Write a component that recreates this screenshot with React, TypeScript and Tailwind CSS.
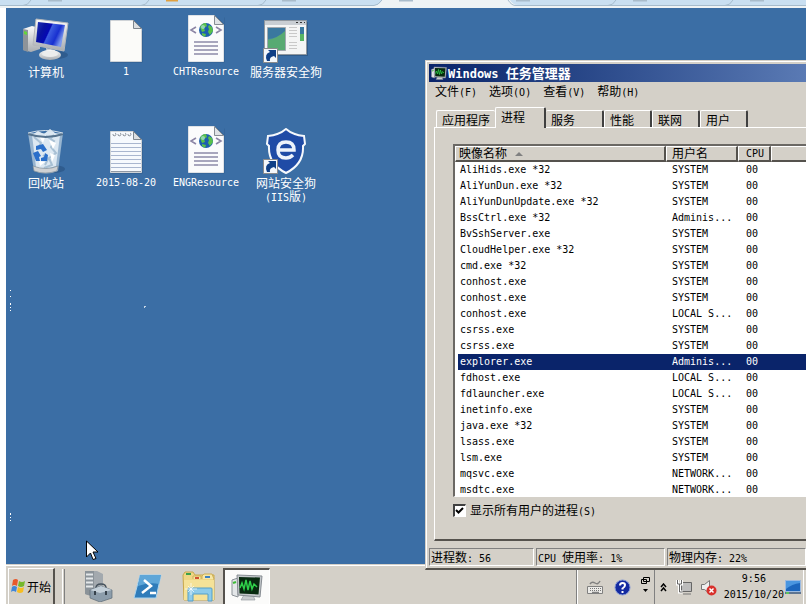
import type { ReactNode } from "react";

const ROWS = [
  ["AliHids.exe *32", "SYSTEM"],
  ["AliYunDun.exe *32", "SYSTEM"],
  ["AliYunDunUpdate.exe *32", "SYSTEM"],
  ["BssCtrl.exe *32", "Adminis..."],
  ["BvSshServer.exe", "SYSTEM"],
  ["CloudHelper.exe *32", "SYSTEM"],
  ["cmd.exe *32", "SYSTEM"],
  ["conhost.exe", "SYSTEM"],
  ["conhost.exe", "SYSTEM"],
  ["conhost.exe", "LOCAL S..."],
  ["csrss.exe", "SYSTEM"],
  ["csrss.exe", "SYSTEM"],
  ["explorer.exe", "Adminis..."],
  ["fdhost.exe", "LOCAL S..."],
  ["fdlauncher.exe", "LOCAL S..."],
  ["inetinfo.exe", "SYSTEM"],
  ["java.exe *32", "SYSTEM"],
  ["lsass.exe", "SYSTEM"],
  ["lsm.exe", "SYSTEM"],
  ["mqsvc.exe", "NETWORK..."],
  ["msdtc.exe", "NETWORK..."],
];

const MENUS = ["文件(F)", "选项(O)", "查看(V)", "帮助(H)"];

// Latin glyphs are half as wide as the Chinese ones
function T({ children }: { children: string }) {
  return (
    <span>
      {children.split(/([\u4e00-\u9fff]+)/).map((s, i) =>
        i % 2 ? (
          <span key={i} className="text-[12px] font-['Noto_Sans_CJK_SC',sans-serif]">{s}</span>
        ) : (
          s
        )
      )}
    </span>
  );
}

function ComputerIcon() {
  return (
    <svg width="48" height="48" viewBox="0 0 48 48">
      <defs>
        <linearGradient id="scr" x1="0" y1="0" x2="1" y2=".4">
          <stop offset="0" stopColor="#2438b8" />
          <stop offset=".3" stopColor="#0a12a0" />
          <stop offset=".5" stopColor="#0408b4" />
          <stop offset=".54" stopColor="#3c5ce0" />
          <stop offset=".8" stopColor="#1830d0" />
          <stop offset="1" stopColor="#7c98ec" />
        </linearGradient>
        <linearGradient id="metal" x1="0" y1="0" x2="0" y2="1">
          <stop offset="0" stopColor="#fafafa" />
          <stop offset="1" stopColor="#a9adb1" />
        </linearGradient>
      </defs>
      <ellipse cx="34" cy="38" rx="12" ry="4" fill="#234a78" opacity=".5" />
      <path d="M1 12l9-3 8 2v21l-9 3-8-2z" fill="url(#metal)" />
      <path d="M1 12l5 1v22l-5-2z" fill="#8d9399" />
      <path d="M2 14l3 1v3l-3-1z" fill="#63d63a" />
      <path d="M24 31l9 2-1 5h-7z" fill="#cdd0d3" />
      <ellipse cx="28" cy="38" rx="11" ry="5" fill="url(#metal)" />
      <ellipse cx="28" cy="37" rx="8" ry="3" fill="#eceded" />
      <path d="M14 2l32 4-4 28-31-6z" fill="url(#metal)" stroke="#b4b7bb" />
      <path d="M16 5l27 3-4 22-25-5z" fill="url(#scr)" />
    </svg>
  );
}

function BinIcon() {
  return (
    <svg width="48" height="48" viewBox="0 0 48 48">
      <ellipse cx="31" cy="41" rx="12" ry="4" fill="#234a78" opacity=".5" />
      <path d="M6 5l35 0-5 38q-12 5-24 0z" fill="#98b5d0" />
      <path d="M10 7l6-4 6 3 6-5 5 4 5 2-4 31q-11 4-20 1z" fill="#dce8f2" />
      <path d="M24 8l8 5-3 6 5 6-7 5 3 7-8 3M12 9l7 6-4 7M32 7l-4 4M21 27l5 4-3 6" fill="none" stroke="#a8c0d4" strokeWidth="2" />
      <path d="M27 12l7 3-3 6zM28 25l5 2-3 7zM17 8l6 1-2 6zM17 33l6 1-5 4z" fill="#fff" />
      <path d="M6 6q18 6 35 0" fill="none" stroke="#56738e" strokeWidth="2" />
      <path d="M6 5q17-5 35 0" fill="none" stroke="#d3dfe9" strokeWidth="1" />
      <path d="M11 38q13 5 25 0l-1 5q-12 4-23 0z" fill="#cfd1d3" stroke="#7b8892" strokeWidth=".6" />
      <path d="M14 18l7-2 4 6-4 2-2-3-5 1zM11 25l5-2 3 5-2 1 1 4-4 0zM19 33l6 0 1-6-3-2-1 4-3 1z" fill="#2a6fca" />
    </svg>
  );
}

function PageIcon({ lined = false }: { lined?: boolean }) {
  return (
    <svg width="48" height="48" viewBox="0 0 48 48">
      <path d="M9.500 5.500h22l9 9v31h-31z" fill="#24486f" opacity=".5" />
      <path d="M8.500 3.500h23l8 8v33h-31z" fill={lined ? "#f6f9fd" : "#fbfbf9"} stroke="#cfd3d7" />
      {lined && (
        <>
          <path d="M9 15.500h30M9 19.500h30M9 23.500h30M9 27.500h30M9 31.500h30M9 35.500h30M9 39.500h30" stroke="#a9b6cf" />
          <path d="M9 43.500h30" stroke="#8f98a4" />
          <path d="M11 6a1.500 1.500 0 1 0 2-1M16 6a1.500 1.500 0 1 0 2-1M21 6a1.500 1.500 0 1 0 2-1M26 6a1.500 1.500 0 1 0 2-1" fill="none" stroke="#777f89" strokeWidth=".8" />
        </>
      )}
      <path d="M31.500 3.500v8h8z" fill="#dcdfe1" stroke="#7f868d" />
    </svg>
  );
}

function XmlIcon() {
  return (
    <svg className="overflow-visible" width="48" height="48" viewBox="0 4 48 48">
      <path d="M7.500 4.500h35v45h-35z" fill="#24486f" opacity=".4" />
      <path d="M6.500 2.500h26l9 9v37h-35z" fill="#fbfbfc" stroke="#dfe2e6" />
      <path d="M33 2l9 9V2z" fill="#3b6ea5" />
      <path d="M32.500 2.500v9h9z" fill="#e0e3e6" stroke="#868c94" />
      <path d="M14 14l-5 3 5 3M34 14l5 3-5 3" fill="none" stroke="#8d86a6" strokeWidth="1.600" />
      <circle cx="24" cy="17" r="7" fill="#1e5fae" />
      <path d="M18 14q2-4 6-4l1 3-3 2 1 3-3 1zM27 12l3 2 1 4-3 4-2-3 1-3-1-2zM20 20l4 1-1 3-3-2z" fill="#59c14b" />
      <circle cx="21" cy="14" r="2" fill="#b9e4f4" opacity=".6" />
      <path d="M12 29h24M12 33h24M12 37h24M12 41h24" stroke="#8d8ba8" strokeWidth="1.600" />
    </svg>
  );
}

function Shortcut() {
  return (
    <g>
      <path d="M1.500 33.500h14v14h-14z" fill="#f3f7fb" stroke="#8b8b8b" />
      <path d="M5 46q-3-7 3-9l-2-2h8v8l-2-2q-5 1-4 5z" fill="#0f3f86" />
    </g>
  );
}

function ServerDogIcon() {
  return (
    <svg width="48" height="48" viewBox="0 2 48 48">
      <path d="M3 7h43v34H3z" fill="#24486f" opacity=".5" />
      <path d="M2.500 5.500h42v34h-42z" fill="#f4f5f5" stroke="#8f979f" />
      <path d="M3 6h41v4H3z" fill="#c9ced3" />
      <path d="M34 7.500h2M38 7.500h2M42 7.500h1" stroke="#333" />
      <path d="M5.500 12.500h18v23h-18z" fill="#4a92a0" stroke="#a1a9b0" />
      <path d="M6 35v-10q10-2 17-10v20z" fill="#58aa72" />
      <path d="M6 13h17v3q-7 7-17 8z" fill="#3a789f" />
      <path d="M27 12.500h8M27 15.500h8M27 18.500h8M27 21.500h8M27 27.500h8M27 30.500h8M27 33.500h8" stroke="#c9c9c9" />
      <path d="M38 12h4v7h-4z" fill="#3a789f" />
      <path d="M38 19h4v7h-4z" fill="#58b464" />
      <Shortcut />
    </svg>
  );
}

function ShieldIcon() {
  return (
    <svg width="48" height="48" viewBox="0 2 48 48">
      <path d="M24 3q7 6 18 7l1 8-2 2q1 18-17 27Q6 38 7 20l-2-2 1-8q11-1 18-7z" fill="#1f4ba6" stroke="#f5f8fc" strokeWidth="2" />
      <path d="M17 24h15q0-8-8-8t-8 8 8 8q4 0 7-3" fill="none" stroke="#eef3fb" strokeWidth="3.500" />
      <Shortcut />
    </svg>
  );
}

function DesktopIcon({ label, children }: { label: string; children: ReactNode }) {
  return (
    <button className="flex flex-col items-center text-white">
      {children}
      <span className="flex flex-col items-center whitespace-nowrap leading-[13px]">
        {label.split("\n").map((l) => (
          <span key={l} className="block h-[13px]"><T>{l}</T></span>
        ))}
      </span>
    </button>
  );
}

function MonitorGlyph({ className }: { className: string }) {
  return (
    <svg className={className} viewBox="0 0 32 32">
      <path d="M1 9l6-2v19l-6-2z" fill="#e3e6e8" stroke="#8b9197" />
      <path d="M2 12l3-1" stroke="#3ebc36" strokeWidth="2" />
      <path d="M13 24h9l2 5H10z" fill="#c9cccf" stroke="#8b9197" strokeWidth=".6" />
      <path d="M6 4l25 1-2 21-22-2z" fill="#c4c8cb" stroke="#868c92" />
      <path d="M8 6l21 .500-1.500 17-19-1z" fill="#082a10" />
      <path d="M9 17l2-5 2 6 2-9 2 10 2-9 2 8 2-5 3 3" fill="none" stroke="#2fd14a" strokeWidth="1.500" />
    </svg>
  );
}

function Tab({ label, className }: { label: string; className: string }) {
  return (
    <button
      role="tab"
      className={"rounded-t-[2px] border-t border-l border-t-white border-l-white border-r-[#404040] pl-[5px] text-left " + className}
    >
      <T>{label}</T>
    </button>
  );
}

function TaskManager() {
  return (
    <section className="absolute left-[425px] right-0 top-[60px] overflow-hidden border-t border-l border-b-2 border-t-[#d4d0c8] border-l-[#d4d0c8] border-b-[#55524d] bg-[#d4d0c8]">
      <div className="border-t border-l border-white pt-[2px] pl-[2px] pb-[2px]">
        <header className="flex h-[18px] items-center gap-px bg-linear-to-r from-[#0a246a] to-[#5a7ab4] pl-[2px] text-white">
          <MonitorGlyph className="size-4" />
          <h1 className="whitespace-pre text-[12px] font-bold">
            Windows <span className="text-[13px] font-['Noto_Sans_CJK_SC',sans-serif]">任务管理器</span>
          </h1>
        </header>
        <nav className="flex h-[25px] gap-3 pl-[6px] leading-5">
          {MENUS.map((m) => (
            <button key={m} className="flex h-5 items-center"><T>{m}</T></button>
          ))}
        </nav>

        <div className="pl-[5px]">
          <div role="tablist" className="flex items-end pl-[2px]">
            <Tab label="应用程序" className="h-[17px] w-[59px] border-r-0" />
            <Tab label="进程" className="relative z-10 -mb-px h-[21px] w-[51px] border-r-2 bg-[#d4d0c8] pb-1" />
            <Tab label="服务" className="h-[17px] w-[58px] border-l-0 border-r-2" />
            <Tab label="性能" className="h-[17px] w-12 border-r-2" />
            <Tab label="联网" className="h-[17px] w-12 border-r-2" />
            <Tab label="用户" className="h-[17px] w-12 border-r-2" />
          </div>
          <div className="border-t border-l border-b-2 border-t-white border-l-white border-b-[#55524d] pt-4 pl-[18px]">
            <div className="h-[353px] overflow-hidden border-t-2 border-l-2 border-b border-t-[#6b6864] border-l-[#6b6864] border-b-white bg-white">
              <table className="w-full table-fixed border-separate border-spacing-0 text-left">
                <colgroup>
                  <col className="w-[211px]" />
                  <col className="w-[72px]" />
                  <col className="w-[33px]" />
                  <col />
                </colgroup>
                <thead>
                  <tr className="h-4 bg-[#d4d0c8] leading-[13px] *:border-t *:border-l *:border-t-white *:border-l-white *:border-b-2 *:border-b-[#55524d] *:p-0 *:font-normal">
                    <th className="border-r-2 border-r-[#55524d]">
                      <div className="flex h-[13px] items-center gap-2 pl-[3px]">
                        <T>映像名称</T>
                        <svg width="8" height="4" viewBox="0 0 8 4"><path d="M4 0l4 4H0z" fill="#808080" /></svg>
                      </div>
                    </th>
                    <th className="border-r-2 border-r-[#55524d]"><div className="flex h-[13px] items-center pl-[5px]"><T>用户名</T></div></th>
                    <th className="border-r-2 border-r-[#55524d]"><div className="flex h-[13px] items-center pl-[7px]">CPU</div></th>
                    <th />
                  </tr>
                </thead>
                <tbody>
                  {ROWS.map(([name, user], i) => (
                    <tr key={i} className={name === "explorer.exe" ? "h-4 bg-[#0a246a] leading-4 text-white" : "h-4 leading-4"}>
                      <td className="border-l-[3px] border-white p-0 pl-[2px]">{name}</td>
                      <td className="p-0 pl-[6px]">{user}</td>
                      <td className="p-0 pl-2">00</td>
                      <td className="p-0" />
                    </tr>
                  ))}
                </tbody>
              </table>
            </div>
            <label className="mt-[5px] mb-[21px] flex h-4 w-fit items-center gap-1">
              <input
                type="checkbox"
                defaultChecked
                className="size-[13px] appearance-none border border-t-2 border-l-2 border-t-[#404040] border-l-[#404040] border-r-white border-b-white bg-white"
              />
              <svg className="-ml-[15px] mr-[2px] size-[9px]" viewBox="0 0 9 9">
                <path d="M1 4l2.500 2.500L8 2" fill="none" stroke="#000" strokeWidth="2" />
              </svg>
              <T>显示所有用户的进程(S)</T>
            </label>
          </div>
        </div>

        <footer className="mt-[7px] flex h-[18px] gap-[2px] leading-4 *:whitespace-pre *:border *:border-t-[#808080] *:border-l-[#808080] *:border-r-white *:border-b-white *:pl-px">
          <div className="w-[105px]"><T>进程数: 56</T></div>
          <div className="w-[129px]"><T>CPU 使用率: 1%</T></div>
          <div className="flex-1 border-r-0"><T>物理内存: 22%</T></div>
        </footer>
      </div>
    </section>
  );
}

function Taskbar() {
  return (
    <footer className="ml-[6px] flex h-10 shrink-0 border-t border-[#d4d0c8] bg-[#d4d0c8]">
      <div className="flex flex-1 items-stretch border-t border-white pt-[2px]">
        <button className="ml-[2px] flex w-[47px] items-center border-t border-l border-r-2 border-t-white border-l-white border-r-[#55524d] pl-px">
          <svg width="17" height="17" viewBox="0 0 17 17">
            <path d="M3 2q3-2 5 0L7 8Q4 6 2 8z" fill="#e8592b" />
            <path d="M9 3q3 2 6 0l-1 5q-3 2-6 0z" fill="#76b82c" />
            <path d="M2 9q2-2 5 0l-1 5q-3-2-5 0z" fill="#3f86d8" />
            <path d="M8 9q3 2 6 0l-1 5q-3 2-6 0z" fill="#f6bd22" />
          </svg>
          <T>开始</T>
        </button>
        <div className="mt-px ml-[7px] w-[3px] border-l border-r border-l-white border-r-[#808080]" />
        <div className="flex items-center gap-[18px] pl-[17px]">
          <button aria-label="服务器管理器">
            <svg width="32" height="32" viewBox="0 0 32 32">
              <path d="M3 1h12l6 3v22H8l-5-2z" fill="#a3a9ae" />
              <path d="M3 1h9v24H6l-3-1z" fill="#8b9399" />
              <path d="M4 4.500h7M4 8.500h7M4 12.500h7M4 16.500h7" stroke="#e4e8ea" strokeWidth="2" />
              <path d="M14 18q0-4 5-4t5 4" fill="none" stroke="#45525d" strokeWidth="1.500" />
              <path d="M8 20l11-4 11 4v8l-12 4-10-4z" fill="#8c9dab" stroke="#5c6a76" strokeWidth=".7" />
              <path d="M8 20l10 3 12-3-11-4z" fill="#c3cfd8" />
              <path d="M13 21v4M24 21v4" stroke="#36424c" strokeWidth="2" />
            </svg>
          </button>
          <button aria-label="PowerShell">
            <svg width="32" height="32" viewBox="0 0 32 32">
              <path d="M8 5h21l-5 23H2z" fill="#2f7cba" stroke="#a9d3ee" />
              <path d="M8 5h21l-2 9q-10-2-21 2z" fill="#5ea6d8" />
              <path d="M12 10l7 6-9 7M18 23h6" fill="none" stroke="#fff" strokeWidth="2.500" />
            </svg>
          </button>
          <button aria-label="资源管理器">
            <svg width="34" height="32" viewBox="0 0 34 32">
              <path d="M1 5l2-3h8l2 3h19v25H2z" fill="#efd684" stroke="#c9a94c" />
              <path d="M4 4h5" stroke="#3aa04b" strokeWidth="2" />
              <path d="M11 9V6h8v3M20 9V6l2-2h8l2 5" fill="#f7e7a6" stroke="#cdae55" />
              <path d="M13 8h4" stroke="#d1502f" strokeWidth="2" />
              <path d="M23 7h5" stroke="#3c7fc0" strokeWidth="2" />
              <path d="M2 10h30v20H2z" fill="#f5e298" />
              <path d="M6 31V19q0-1 1-1h22q1 0 1 1v12h-4v-7H11v7z" fill="#8ccbea" stroke="#559fc8" />
              <path d="M9 13v12M3 19h12M6 16l6 6M12 16l-6 6" stroke="#fff" strokeWidth=".7" />
            </svg>
          </button>
        </div>
        <button aria-label="任务管理器" className="ml-[7px] flex w-[47px] items-center justify-center border-t-2 border-l-2 border-t-[#55524d] border-l-[#55524d] border-r border-r-white bg-[#fbfbfa]">
          <MonitorGlyph className="h-8 w-8" />
        </button>

        {/* tray */}
        <div className="ml-auto flex items-stretch pt-[2px]">
          <div className="w-[2px] border-l border-l-[#808080] bg-white" />
          <div className="flex items-center gap-[10px] pl-[9px] pr-[4px]">
            <svg width="17" height="15" viewBox="0 0 17 15">
              <path d="M.500 6.500h15v7H.500z" fill="#ecebe8" stroke="#808080" />
              <path d="M3 8.500h11M3 10.500h11" stroke="#777" strokeDasharray="1 1" />
              <path d="M5 12.500h7M3 4q2-3 5-1t5-2" fill="none" stroke="#808080" strokeWidth="1.500" />
            </svg>
            <svg width="17" height="17" viewBox="0 0 17 17">
              <circle cx="8.500" cy="8.500" r="7.500" fill="#142aa0" stroke="#8297d6" />
              <path d="M6 6.500q0-2.500 2.500-2.500t2.500 2-2.500 3.500v1M8.500 12v2" fill="none" stroke="#fff" strokeWidth="2" />
            </svg>
            <svg className="mb-1" width="9" height="16" viewBox="0 0 9 16">
              <path d="M2.500.500h6v4h-6zM.500 2.500h5v4h-5z" fill="#d4d0c8" stroke="#000" />
              <path d="M2 12h5L4.500 15z" />
            </svg>
          </div>
          <div className="w-[2px] border-l border-l-[#808080]" />
          <div className="flex items-center pl-1">
            <svg width="7" height="9" viewBox="0 0 7 9">
              <path d="M1 4l2.500-3L6 4M1 8l2.500-3L6 8" fill="none" stroke="#000" strokeWidth="1.500" />
            </svg>
            <svg className="ml-[9px]" width="17" height="17" viewBox="0 0 17 17">
              <path d="M5.500 3.500h10v9h-10z" fill="#bcbcbc" stroke="#666" />
              <path d="M7 15h8" stroke="#777" />
              <path d="M1.500 1v4h4V1M3.500 5v8h3" fill="none" stroke="#fff" strokeWidth="3" />
              <path d="M1.500 1v4h4V1M3.500 5v8h3" fill="none" stroke="#666" />
            </svg>
            <svg className="ml-[7px]" width="17" height="17" viewBox="0 0 17 17">
              <path d="M1.500 5.500h3l5-4v13l-5-4h-3z" fill="#eee" stroke="#777" />
              <circle cx="11.500" cy="11.500" r="5" fill="#d8302c" />
              <path d="M9.500 9.500l4 4M13.500 9.500l-4 4" stroke="#fff" strokeWidth="1.500" />
            </svg>
            <div className="ml-[7px] flex flex-col items-center leading-4">
              <time>9:56</time>
              <time>2015/10/20</time>
            </div>
            <button aria-label="显示桌面" className="ml-px mr-[2px]">
              <svg width="16" height="14" viewBox="0 0 16 14">
                <path d="M.500.500h15v11H.500z" fill="#1c66bd" stroke="#9dbbe0" />
                <path d="M1 1h14v2Q7 4 1 9z" fill="#4a96e0" />
                <path d="M0 12h16v2H0z" fill="#5f7591" />
                <path d="M1 12h3v2H1z" fill="#5cc25c" />
              </svg>
            </button>
            <div className="h-full w-[3px] border-l border-l-white bg-[#d4d0c8]" />
          </div>
        </div>
      </div>
    </footer>
  );
}

export default function App() {
  return (
    <div className="relative flex min-h-screen w-full flex-col overflow-hidden bg-white font-['DejaVu_Sans_Mono','Noto_Sans_CJK_SC',monospace] text-[10px] text-black">
      {/* bottom edge of the browser's tab strip */}
      <svg className="h-2 w-full bg-[#eef3f5]" viewBox="0 0 806 8" preserveAspectRatio="xMinYMin slice">
        <path d="M0 0h382q-3 6-8 5H0zM510 0h296v5H518q-5 0-8-5z" fill="#c9dff1" />
        <path d="M0 5.500h374q4 0 8-5.500M508 0q4 6 8 5.500h290" fill="none" stroke="#a6bccd" />
        <path d="M23 5.500q5 0 8-5.500M141 5.500q5 0 8-5.500M258 5.500q5 0 8-5.500M608 5.500q5 0 8-5.500M725 5.500q5 0 8-5.500" fill="none" stroke="#a6bccd" />
        <path d="M48 0h14M282 0h14M399 0h14M516 0h14M633 0h14M750 0h14" stroke="#a9bccb" strokeWidth="3" />
        <path d="M166 0h12" stroke="#e0a040" strokeWidth="3" />
      </svg>

      <main className="relative ml-[6px] flex-1 bg-[#3b6ea5] pt-[9px]">
        <div className="grid w-[320px] grid-cols-4 grid-rows-[111px_111px] items-start">
          <DesktopIcon label="计算机"><ComputerIcon /></DesktopIcon>
          <DesktopIcon label="1"><PageIcon /></DesktopIcon>
          <DesktopIcon label="CHTResource"><XmlIcon /></DesktopIcon>
          <DesktopIcon label="服务器安全狗"><ServerDogIcon /></DesktopIcon>
          <DesktopIcon label="回收站"><BinIcon /></DesktopIcon>
          <DesktopIcon label="2015-08-20"><PageIcon lined /></DesktopIcon>
          <DesktopIcon label="ENGResource"><XmlIcon /></DesktopIcon>
          <DesktopIcon label={"网站安全狗\n(IIS版)"}><ShieldIcon /></DesktopIcon>
        </div>

        {/* stray pixels and the pointer */}
        <svg className="absolute left-[3px] top-[280px]" width="3" height="240" viewBox="0 0 3 240" fill="#fff">
          <path d="M1 2h1v1H1zM1 8h1v1H1zM1 15h1v2H1zM1 19h1v1H1zM1 22h1v1H1zM1 225h1v2H1zM1 229h1v1H1zM1 232h1v1H1z" />
        </svg>
        <svg className="absolute left-[138px] top-[298px]" width="2" height="2" viewBox="0 0 2 2">
          <path d="M0 0h2v1H1v1H0z" fill="#c6d6e6" />
        </svg>
        <svg className="absolute left-[80px] top-[532px]" width="13" height="21" viewBox="0 0 13 21">
          <path d="M.500 1v16l4-4 2.500 6.500 3-1-3-6.500h5z" fill="#fff" stroke="#000" />
        </svg>
      </main>

      <Taskbar />
      <TaskManager />
    </div>
  );
}
